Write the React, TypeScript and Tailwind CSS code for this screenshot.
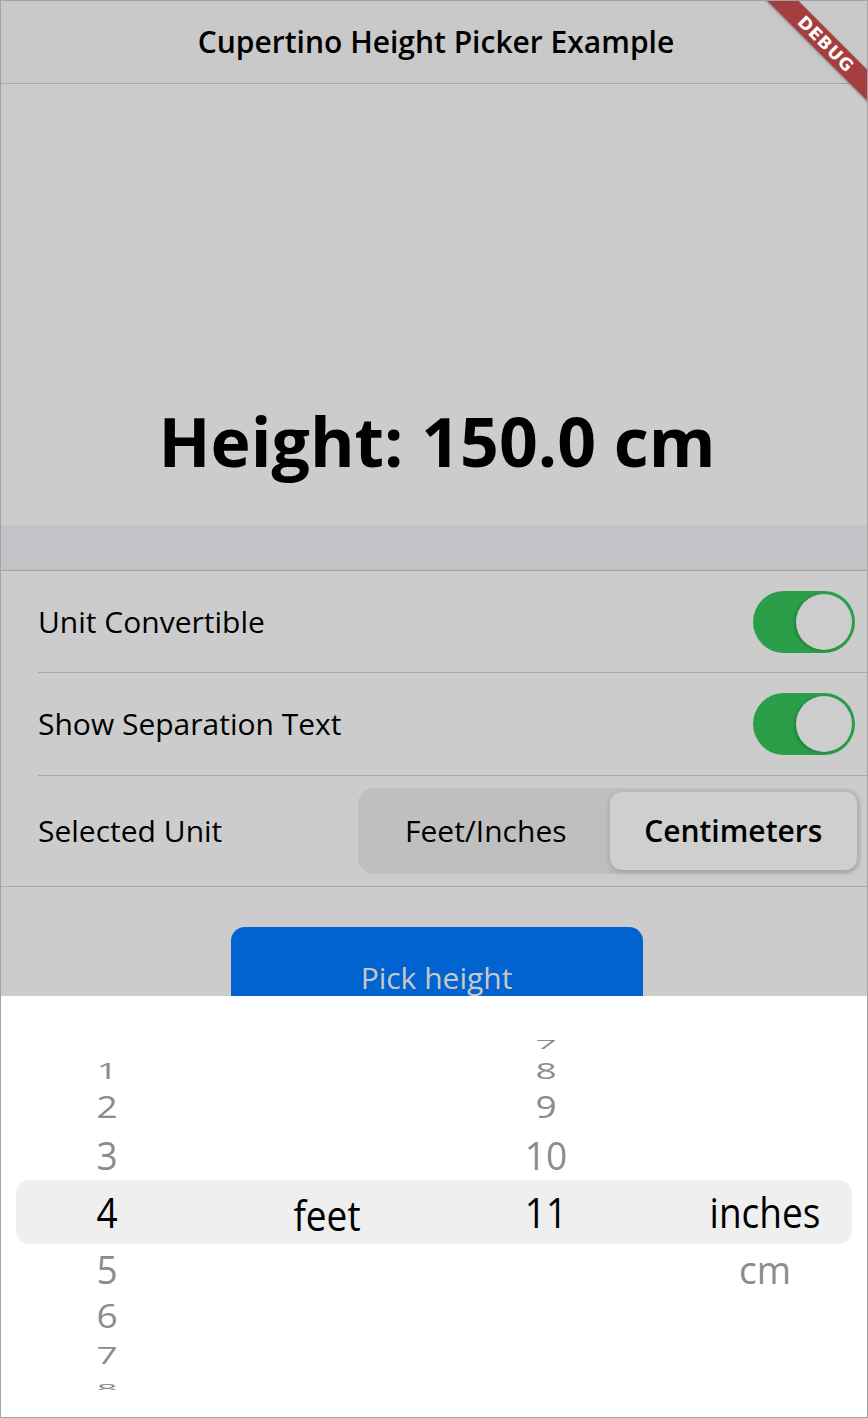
import React from 'react';

type WheelRow = {
  h: number;
  s: number;
  feet?: string;
  inch?: string;
  unit?: string;
  sep?: string;
  selected?: boolean;
  dy?: number;
  clip?: boolean;
};

const rows: WheelRow[] = [
  { h: 24, s: 0.3, inch: '7', dy: -4, clip: true },
  { h: 32, s: 0.52, feet: '1', inch: '8', dy: -2 },
  { h: 42, s: 0.76, feet: '2', inch: '9', dy: -2 },
  { h: 52, s: 0.91, feet: '3', inch: '10', dy: 1 },
  { h: 64, s: 1, feet: '4', inch: '11', sep: 'feet', unit: 'inches', selected: true, dy: -1 },
  { h: 52, s: 0.93, feet: '5', unit: 'cm', dy: -2 },
  { h: 42, s: 0.8, feet: '6', dy: -2 },
  { h: 32, s: 0.55, feet: '7', dy: -1 },
  { h: 20, s: 0.3, feet: '8', clip: true },
];

const Toggle: React.FC = () => (
  <div className="w-[102px] h-[62px] rounded-full bg-[#2a9e48] p-[3px] flex justify-end">
    <div className="w-[56px] h-[56px] rounded-full bg-[#cdcdcd] shadow-[-2px_1px_3px_rgba(0,0,0,0.18)]" />
  </div>
);

const Cell: React.FC<{ text?: string; scale: number; dy?: number; className?: string }> = ({ text, scale, dy = 0, className }) => (
  <div className={`flex items-center justify-center ${className ?? ''}`}>
    {text && (
      <span
        className="leading-none"
        style={{ transform: `translateY(${dy}px) scaleY(${scale * 1.12})` }}
      >
        {text}
      </span>
    )}
  </div>
);

const Wheel: React.FC = () => (
  <div className="flex flex-col text-[37px]">
    {rows.map((r, i) => {
      const color = r.selected ? 'text-black' : 'text-[#8c8c8c]';
      const grid = (
        <div
          className={`grid grid-cols-[212px_228px_210px_216px] ${r.clip ? 'overflow-hidden' : ''} ${color}`}
          style={{ height: r.h }}
        >
          <Cell text={r.feet} scale={r.s} dy={r.dy} />
          <Cell text={r.sep} scale={r.s} dy={2} />
          <Cell text={r.inch} scale={r.s} dy={r.dy} />
          <Cell text={r.unit} scale={r.s} dy={r.dy} className="pl-[12px]" />
        </div>
      );
      return r.selected ? (
        <div key={i} className="mx-[15px] rounded-[14px] bg-[#efefef]">
          <div className="-mx-[15px]">{grid}</div>
        </div>
      ) : (
        <div key={i}>{grid}</div>
      );
    })}
  </div>
);

export default function App() {
  return (
    <div className="relative w-[868px] h-[1418px] overflow-hidden border border-[#a3a3a3] bg-[#cccccc] flex flex-col font-['Open_Sans',sans-serif] text-black">
      {/* nav bar */}
      <header className="h-[83px] shrink-0 border-b border-[#a8a8a8] bg-[#c9c9c9] flex items-center justify-center pl-[4px]">
        <h1 className="text-[30px] font-semibold leading-none">Cupertino Height Picker Example</h1>
      </header>

      <div className="h-[441px] shrink-0 pt-[323px] text-center pl-[6px]">
        <p className="text-[68px] font-bold leading-none">Height: 150.0 cm</p>
      </div>

      <div className="h-[46px] shrink-0 bg-[#c3c3c7] border-b border-[#a3a3a3]" />

      <div className="shrink-0 pl-[37px]">
        <div className="h-[102px] border-b border-[#a8a8a8] flex items-center justify-between pr-[12px]">
          <span className="text-[30px] leading-none">Unit Convertible</span>
          <Toggle />
        </div>
      </div>
      <div className="shrink-0 pl-[37px]">
        <div className="h-[103px] border-b border-[#a8a8a8] flex items-center justify-between pr-[12px]">
          <span className="text-[30px] leading-none">Show Separation Text</span>
          <Toggle />
        </div>
      </div>
      <div className="h-[111px] shrink-0 border-b border-[#a8a8a8] flex items-center justify-between pl-[37px] pr-[6px]">
        <span className="text-[30px] leading-none">Selected Unit</span>
        <div className="w-[503px] h-[86px] rounded-[16px] bg-[#bfbfbf] p-[4px] grid grid-cols-2">
          <div className="flex items-center justify-center text-[30px] leading-none">Feet/Inches</div>
          <div className="flex items-center justify-center rounded-[12px] bg-[#cfcfcf] shadow-[0_2px_6px_rgba(0,0,0,0.18)] text-[30px] font-semibold leading-none">
            Centimeters
          </div>
        </div>
      </div>

      <div className="h-[109px] shrink-0 overflow-hidden pt-[40px] pl-[5px] flex justify-center">
        <button className="w-[412px] h-[102px] shrink-0 rounded-[14px] bg-[#0063cf] text-[30px] leading-none text-[#c8c8c8]">
          Pick height
        </button>
      </div>

      {/* modal picker sheet */}
      <div className="flex-1 bg-white pt-[34px]">
        <Wheel />
      </div>

      <div className="absolute left-[725px] top-[32px] w-[200px] h-[22px] rotate-45 bg-[#a53e3e] shadow-[0_1px_3px_rgba(0,0,0,0.3)] flex items-center justify-center">
        <span className="text-white text-[17px] font-bold tracking-[1px] leading-none font-['DejaVu_Sans',sans-serif]">DEBUG</span>
      </div>
    </div>
  );
}
